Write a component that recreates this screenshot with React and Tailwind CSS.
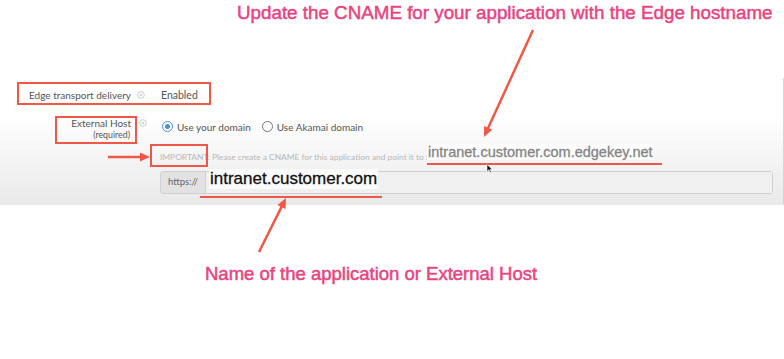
import React from "react";

const CORAL = "#ef5846";

function Arrow({ x1, y1, x2, y2, w = 2.5, head = 10, hw = 4.5 }) {
  const dx = x2 - x1;
  const dy = y2 - y1;
  const len = Math.sqrt(dx * dx + dy * dy);
  const ux = dx / len;
  const uy = dy / len;
  const bx = x2 - ux * head;
  const by = y2 - uy * head;
  const px = -uy;
  const py = ux;
  const pts = `${x2},${y2} ${bx + px * hw},${by + py * hw} ${bx - px * hw},${by - py * hw}`;
  return (
    <g>
      <line x1={x1} y1={y1} x2={bx + ux * 2} y2={by + uy * 2} stroke={CORAL} strokeWidth={w} />
      <polygon points={pts} fill={CORAL} />
    </g>
  );
}

function Info({ className = "" }) {
  return (
    <svg width="8" height="8" viewBox="0 0 8 8" className={className}>
      <circle cx="4" cy="4" r="3.3" fill="none" stroke="#c4c4c4" strokeWidth="0.9" />
      <circle cx="4" cy="4" r="1.1" fill="#c4c4c4" />
    </svg>
  );
}

export default function App() {
  return (
    <div className="relative w-[784px] h-[359px] overflow-hidden bg-white">
      {/* top annotation title */}
      <div className="h-[30px] pl-[237px] pt-[1px] text-[18.8px] leading-[24px] text-[#e8447f] whitespace-nowrap [font-family:'Liberation_Sans',Arial,sans-serif] [-webkit-text-stroke:0.5px_#e8447f]">
        Update the CNAME for your application with the Edge hostname
      </div>
      <div className="h-[48px]" />

      {/* screenshot panel */}
      <div className="h-[127px] border-r border-[#d6d6d6] bg-gradient-to-b from-white from-30% to-[#e9e9e9] pt-[4px] text-[#555] [font-family:Lato,'Open_Sans',sans-serif]">
        {/* row 1 */}
        <div className="ml-[17px] w-[194px] h-[23px] border-2 border-[#ef5846] flex items-center pt-[2px]">
          <div className="w-[112px] text-right text-[10px] leading-[12px] whitespace-nowrap">Edge transport delivery</div>
          <Info className="ml-[6px]" />
          <div className="ml-[16px] text-[10.5px] leading-[12px]">Enabled</div>
        </div>

        {/* row 2 */}
        <div className="mt-[11px] flex items-start">
          <div className="ml-[55px] w-[82px] h-[28px] border-2 border-[#ef5846] flex flex-col items-end pr-[4px]">
            <div className="text-[10px] leading-[11px] whitespace-nowrap">External Host</div>
            <div className="text-[8.8px] leading-[11px] whitespace-nowrap pr-[1px]">(required)</div>
          </div>
          <Info className="ml-[2px] mt-[3px]" />
          <div className="ml-[15px] mt-[5px] flex items-center h-[11px] text-[10px] leading-[12px]">
            <span className="w-[11px] h-[11px] rounded-full border border-[#4a90d9] bg-white flex items-center justify-center">
              <span className="w-[5px] h-[5px] rounded-full bg-[#4a90d9]" />
            </span>
            <span className="ml-[4px] whitespace-nowrap">Use your domain</span>
            <span className="ml-[11px] w-[11px] h-[11px] rounded-full border border-[#777] bg-white" />
            <span className="ml-[4px] whitespace-nowrap">Use Akamai domain</span>
          </div>
        </div>

        {/* row 3 */}
        <div className="relative h-[23px] flex items-start pl-[160px]">
          <div className="w-[267px] mt-[8px] overflow-hidden whitespace-nowrap text-[8.4px] leading-[10px] text-[#b8b8b8]">
            IMPORTANT: Please create a CNAME for this application and point it to :
          </div>
          <div className="flex flex-col items-start">
            <div className="pl-[1px] pr-[1px] bg-[#fcfcfc] text-[14.5px] leading-[16px] text-[#858585] whitespace-nowrap [font-family:'Liberation_Sans',Arial,sans-serif] [-webkit-text-stroke:0.3px_#858585]">
              intranet.customer.com.edgekey.net
            </div>
            <div className="mt-[3px] w-[235px] h-[2px] bg-[#ef5846]" />
          </div>
          <div className="absolute left-[150px] top-0 w-[58px] h-[23px] border-2 border-[#ef5846]" />
          <svg className="absolute left-[486px] top-[20px]" width="7" height="9" viewBox="0 0 7 9">
            <path d="M1 0.5 L1 7.5 L2.8 5.8 L4.2 8.5 L5.3 8 L4 5.3 L6.3 5.2 Z" fill="#111" stroke="#fff" strokeWidth="0.6" />
          </svg>
        </div>

        {/* row 4 input */}
        <div className="mt-[4px] ml-[160px] w-[613px] h-[23px] flex border border-[#cfcfcf] rounded-[3px]">
          <div className="w-[45px] bg-[#e2e2e2] border-r border-[#cfcfcf] rounded-l-[3px] flex items-center justify-center text-[9.5px] text-[#666]">
            https://
          </div>
          <div className="flex-1 bg-[#f0f0f0] pl-[3px] flex items-start">
            <span className="-mt-[3px] px-[1px] bg-[#fafafa] text-[17px] leading-[20px] text-[#111] whitespace-nowrap [font-family:'Liberation_Sans',Arial,sans-serif] [-webkit-text-stroke:0.3px_#111]">
              intranet.customer.com
            </span>
          </div>
        </div>
        <div className="mt-[2px] ml-[200px] w-[182px] h-[2px] bg-[#ef5846]" />
      </div>

      {/* bottom annotation */}
      <div className="mt-[57px] pl-[205px] text-[18.5px] leading-[24px] text-[#e8447f] whitespace-nowrap [font-family:'Liberation_Sans',Arial,sans-serif] [-webkit-text-stroke:0.5px_#e8447f]">
        Name of the application or External Host
      </div>

      {/* annotation arrows */}
      <svg className="absolute inset-0 pointer-events-none" width="784" height="359">
        <Arrow x1={533} y1={30} x2={484} y2={137} />
        <Arrow x1={108} y1={157} x2={150} y2={157} />
        <Arrow x1={259} y1={252} x2={286} y2={198} />
      </svg>
    </div>
  );
}
